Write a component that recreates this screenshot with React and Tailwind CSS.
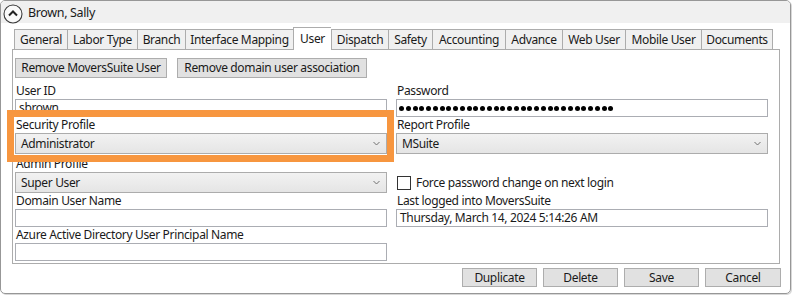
import React from "react";

const tabs = [
  { label: "General", w: "w-[53px]" },
  { label: "Labor Type", w: "w-[70px]" },
  { label: "Branch", w: "w-[48px]" },
  { label: "Interface Mapping", w: "w-[108px]" },
  { label: "User", w: "w-[38px]", active: true },
  { label: "Dispatch", w: "w-[57px]" },
  { label: "Safety", w: "w-[44px]" },
  { label: "Accounting", w: "w-[73px]" },
  { label: "Advance", w: "w-[57px]" },
  { label: "Web User", w: "w-[63px]" },
  { label: "Mobile User", w: "w-[76px]" },
  { label: "Documents", w: "w-[72px]", last: true },
];

const Label = ({ children }) => (
  <div className="h-full flex items-end pl-px leading-[16px] whitespace-nowrap">{children}</div>
);

const TextBox = ({ children }) => (
  <div className="h-[18px] border border-[#abadb3] bg-white pl-[3px] leading-[16px] overflow-hidden whitespace-nowrap">{children}</div>
);

const Select = ({ value }) => (
  <div className="h-[21px] border border-[#acacac] bg-gradient-to-b from-[#f2f2f2] to-[#e5e5e5] flex items-center justify-between pl-[5px] pr-[6px]">
    <span className="leading-[16px]">{value}</span>
    <svg width="7" height="5" viewBox="0 0 7 5">
      <polyline points="0.5,1 3.5,4 6.5,1" fill="none" stroke="#707070" strokeWidth="1" />
    </svg>
  </div>
);

const Btn = ({ children, w, h = "h-[20px]" }) => (
  <div className={`${w} ${h} border border-[#adadad] bg-[#e1e1e1] flex items-center justify-center leading-[16px] whitespace-nowrap`}>
    {children}
  </div>
);

export default function App() {
  return (
    <div className="w-[792px] h-[296px] bg-white relative text-[12px] tracking-[-0.35px] text-[#1a1a1a] font-['Noto_Sans',sans-serif]">
      <div className="w-[791px] h-[294px] border border-[#979797] rounded-[5px] overflow-hidden flex flex-col shadow-[1px_1px_0_#d8d8d8]">
        {/* Header */}
        <div className="h-[22px] bg-[#f0f0f0] flex items-center pl-[2px] gap-[5px]">
          <svg width="20" height="20" viewBox="0 0 20 20" className="mt-[3px]">
            <circle cx="10" cy="10" r="9" fill="#fafafa" stroke="#3a3a3a" strokeWidth="1.1" />
            <polyline points="6,11.5 10,7.5 14,11.5" fill="none" stroke="#222" strokeWidth="2" />
          </svg>
          <span className="text-[12.5px] mt-[3px]">Brown, Sally</span>
        </div>

        {/* Body */}
        <div className="flex-1 pl-[11px] flex flex-col">
          {/* Tabs */}
          <div className="h-[22px] mt-[4px] ml-[2px] flex items-end">
            {tabs.map((t) =>
              t.active ? (
                <div
                  key={t.label}
                  className={`${t.w} h-[23px] -mb-px relative z-10 bg-white border-t border-l border-[#acacac] flex items-start justify-center pt-[3px] leading-[16px]`}
                >
                  {t.label}
                </div>
              ) : (
                <div
                  key={t.label}
                  className={`${t.w} h-[20px] bg-[#f0f0f0] border-t border-l ${t.last ? "border-r" : ""} border-[#acacac] flex items-center justify-center pt-px leading-[16px] whitespace-nowrap`}
                >
                  {t.label}
                </div>
              )
            )}
          </div>

          {/* Panel */}
          <div className="w-[768px] h-[215px] border border-[#acacac] bg-white pl-[2px] pt-[8px] flex flex-col">
            <div className="flex gap-[10px]">
              <Btn w="w-[152px]">Remove MoversSuite User</Btn>
              <Btn w="w-[190px]">Remove domain user association</Btn>
            </div>

            <div className="grid grid-cols-[372px_372px] gap-x-[9px] grid-rows-[21px_18px_16px_21px_18px_21px_16px_18px_16px_18px]">
              {/* left column */}
              <div className="col-start-1 row-start-1"><Label>User ID</Label></div>
              <div className="col-start-1 row-start-2"><TextBox>sbrown</TextBox></div>
              <div className="col-start-1 row-start-3"><Label>Security Profile</Label></div>
              <div className="col-start-1 row-start-4"><Select value="Administrator" /></div>
              <div className="col-start-1 row-start-5"><Label>Admin Profile</Label></div>
              <div className="col-start-1 row-start-6"><Select value="Super User" /></div>
              <div className="col-start-1 row-start-7"><Label>Domain User Name</Label></div>
              <div className="col-start-1 row-start-8"><TextBox /></div>
              <div className="col-start-1 row-start-9"><Label>Azure Active Directory User Principal Name</Label></div>
              <div className="col-start-1 row-start-10"><TextBox /></div>

              {/* right column */}
              <div className="col-start-2 row-start-1"><Label>Password</Label></div>
              <div className="col-start-2 row-start-2">
                <div className="h-[18px] border border-[#abadb3] bg-white pl-[2px] flex items-center gap-[1.75px]">
                  {Array.from({ length: 32 }).map((_, i) => (
                    <span key={i} className="w-[5px] h-[5px] rounded-full bg-black" />
                  ))}
                </div>
              </div>
              <div className="col-start-2 row-start-3"><Label>Report Profile</Label></div>
              <div className="col-start-2 row-start-4"><Select value="MSuite" /></div>
              <div className="col-start-2 row-start-6 flex items-center gap-[5px] pl-px">
                <span className="w-[14px] h-[14px] border border-[#333] bg-white" />
                <span className="leading-[16px]">Force password change on next login</span>
              </div>
              <div className="col-start-2 row-start-7"><Label>Last logged into MoversSuite</Label></div>
              <div className="col-start-2 row-start-8"><TextBox>Thursday, March 14, 2024 5:14:26 AM</TextBox></div>
            </div>
          </div>

          {/* Bottom buttons */}
          <div className="flex justify-end gap-[6px] pr-[9px] mt-[4px]">
            <Btn w="w-[75px]" h="h-[19px]">Duplicate</Btn>
            <Btn w="w-[75px]" h="h-[19px]">Delete</Btn>
            <Btn w="w-[75px]" h="h-[19px]">Save</Btn>
            <Btn w="w-[76px]" h="h-[19px]">Cancel</Btn>
          </div>
        </div>
      </div>

      {/* Orange highlight annotation */}
      <div className="absolute left-[7px] top-[110px] w-[387px] h-[52px] border-[7px] border-[#f7963f] pointer-events-none" />
    </div>
  );
}
